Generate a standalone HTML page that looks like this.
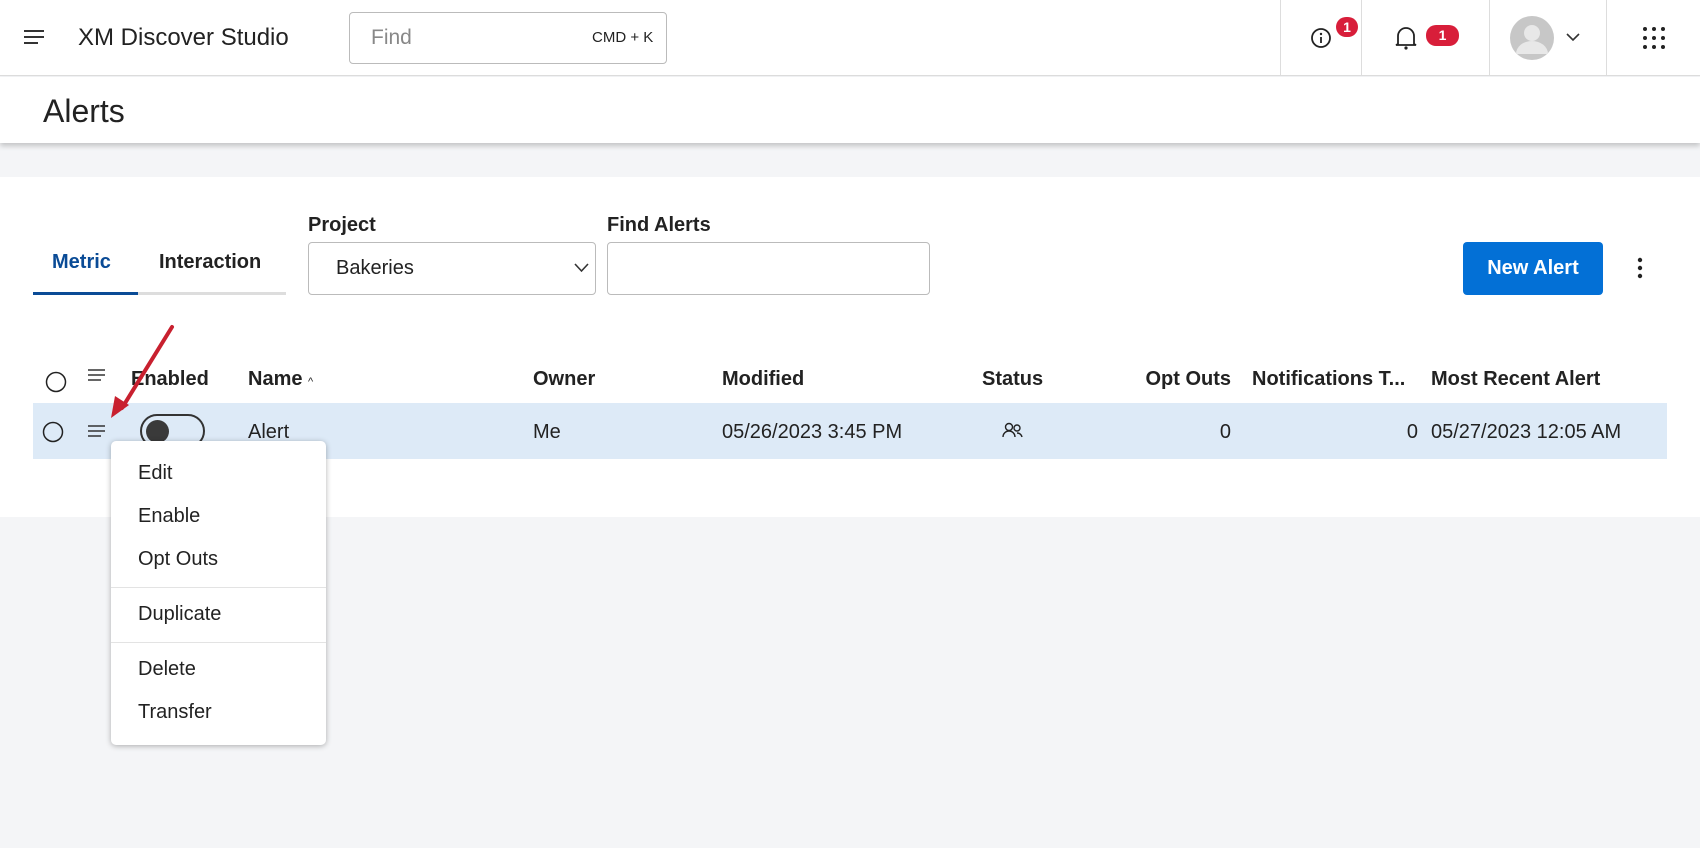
<!DOCTYPE html>
<html><head><style>
*{margin:0;padding:0;box-sizing:border-box}
body{width:1700px;height:848px;background:#f4f5f7;font-family:"Liberation Sans",sans-serif;color:#222;position:relative;overflow:hidden}
.a{position:absolute;white-space:nowrap}
.b{font-weight:bold}
.t{font-size:20px;line-height:1}
</style></head><body>
<div class="a" style="left:0;top:0;width:1700px;height:76px;background:#fff;border-bottom:1px solid #ddd"></div>
<svg class="a" style="left:24px;top:29px" width="20" height="16"><path d="M0 2h20M0 8h20M0 14h14" stroke="#333" stroke-width="2"/></svg>
<div class="a" style="left:78px;top:24px;font-size:24px">XM Discover Studio</div>
<div class="a" style="left:349px;top:12px;width:318px;height:52px;border:1px solid #bbb;border-radius:4px"></div>
<div class="a" style="left:371px;top:26px;font-size:21px;color:#888">Find</div>
<div class="a" style="left:592px;top:29px;font-size:15px">CMD + K</div>
<div class="a" style="left:1280px;top:0;width:1px;height:76px;background:#ddd"></div>
<div class="a" style="left:1361px;top:0;width:1px;height:76px;background:#ddd"></div>
<div class="a" style="left:1489px;top:0;width:1px;height:76px;background:#ddd"></div>
<div class="a" style="left:1606px;top:0;width:1px;height:76px;background:#ddd"></div>
<svg class="a" style="left:1310px;top:27px" width="22" height="22"><circle cx="11" cy="11" r="9" fill="none" stroke="#222" stroke-width="1.8"/><circle cx="11" cy="7" r="1.2" fill="#222"/><path d="M11 10v6" stroke="#222" stroke-width="1.8"/></svg>
<div class="a b" style="left:1336px;top:17px;width:22px;height:20px;border-radius:10px;background:#d81e3a;color:#fff;font-size:14px;text-align:center;line-height:20px">1</div>
<svg class="a" style="left:1395px;top:25px" width="22" height="26"><path d="M3 19V11a8 8 0 0 1 16 0v8l2 1H1z" fill="none" stroke="#222" stroke-width="1.8"/><circle cx="11" cy="23" r="1.6" fill="#222"/></svg>
<div class="a b" style="left:1426px;top:25px;width:33px;height:21px;border-radius:10px;background:#d81e3a;color:#fff;font-size:14px;text-align:center;line-height:21px">1</div>
<svg class="a" style="left:1510px;top:16px" width="44" height="44"><circle cx="22" cy="22" r="22" fill="#c7c7c7"/><circle cx="22" cy="17" r="8" fill="#e8e8e8"/><path d="M6 38a16 13 0 0 1 32 0" fill="#e8e8e8"/></svg>
<svg class="a" style="left:1566px;top:33px" width="14" height="9"><path d="M1 1l6 6 6-6" fill="none" stroke="#333" stroke-width="1.6"/></svg>
<svg class="a" style="left:1642px;top:26px" width="24" height="24"><g fill="#222"><circle cx="3" cy="3" r="2"/><circle cx="12" cy="3" r="2"/><circle cx="21" cy="3" r="2"/><circle cx="3" cy="12" r="2"/><circle cx="12" cy="12" r="2"/><circle cx="21" cy="12" r="2"/><circle cx="3" cy="21" r="2"/><circle cx="12" cy="21" r="2"/><circle cx="21" cy="21" r="2"/></g></svg>

<div class="a" style="left:0;top:77px;width:1700px;height:66px;background:#fff;box-shadow:0 3px 5px rgba(0,0,0,.2)"></div>
<div class="a" style="left:43px;top:93px;font-size:32px">Alerts</div>

<div class="a" style="left:0;top:177px;width:1700px;height:340px;background:#fff"></div>
<div class="a b t" style="left:52px;top:252px;color:#0a4b96">Metric</div>
<div class="a b t" style="left:159px;top:252px">Interaction</div>
<div class="a" style="left:33px;top:292px;width:253px;height:3px;background:#ddd"></div>
<div class="a" style="left:33px;top:292px;width:105px;height:3px;background:#0a4b96"></div>
<div class="a b t" style="left:308px;top:215px">Project</div>
<div class="a" style="left:308px;top:242px;width:288px;height:53px;border:1px solid #bbb;border-radius:4px;background:#fff"></div>
<div class="a t" style="left:336px;top:258px">Bakeries</div>
<svg class="a" style="left:574px;top:263px" width="15" height="10"><path d="M1 1l6.5 7 6.5-7" fill="none" stroke="#333" stroke-width="1.6"/></svg>
<div class="a b t" style="left:607px;top:215px">Find Alerts</div>
<div class="a" style="left:607px;top:242px;width:323px;height:53px;border:1px solid #bbb;border-radius:4px;background:#fff"></div>
<div class="a b t" style="left:1463px;top:242px;width:140px;height:53px;background:#0370d6;border-radius:4px;color:#fff;text-align:center;line-height:53px">New Alert</div>
<svg class="a" style="left:1637px;top:257px" width="6" height="22"><g fill="#222"><circle cx="3" cy="3" r="2.2"/><circle cx="3" cy="11" r="2.2"/><circle cx="3" cy="19" r="2.2"/></g></svg>

<svg class="a" style="left:45px;top:371px" width="22" height="22"><circle cx="11" cy="11" r="9.5" fill="none" stroke="#222" stroke-width="1.5"/></svg>
<svg class="a" style="left:88px;top:369px" width="18" height="14"><path d="M0 1h17M0 6h17M0 11h13" stroke="#333" stroke-width="1.5"/></svg>
<div class="a b t" style="left:131px;top:369px">Enabled</div>
<div class="a b t" style="left:248px;top:369px">Name <span style="font-size:11px;font-weight:normal">^</span></div>
<div class="a b t" style="left:533px;top:369px">Owner</div>
<div class="a b t" style="left:722px;top:369px">Modified</div>
<div class="a b t" style="left:982px;top:369px">Status</div>
<div class="a b t" style="left:1111px;top:369px;width:120px;text-align:right">Opt Outs</div>
<div class="a b t" style="left:1252px;top:369px">Notifications T...</div>
<div class="a b t" style="left:1431px;top:369px">Most Recent Alert</div>

<div class="a" style="left:33px;top:403px;width:1634px;height:56px;background:#ddeaf7"></div>
<svg class="a" style="left:42px;top:421px" width="22" height="22"><circle cx="11" cy="11" r="9.5" fill="none" stroke="#222" stroke-width="1.5"/></svg>
<svg class="a" style="left:88px;top:425px" width="18" height="14"><path d="M0 1h17M0 6h17M0 11h13" stroke="#333" stroke-width="1.5"/></svg>
<div class="a" style="left:140px;top:414px;width:65px;height:34px;border:2px solid #333;border-radius:17px"></div>
<div class="a" style="left:146px;top:420px;width:23px;height:23px;border-radius:50%;background:#3a3a3a"></div>
<div class="a t" style="left:248px;top:422px">Alert</div>
<div class="a t" style="left:533px;top:422px">Me</div>
<div class="a t" style="left:722px;top:422px">05/26/2023 3:45 PM</div>
<svg class="a" style="left:1002px;top:422px" width="22" height="16"><circle cx="7" cy="5" r="3.5" fill="none" stroke="#222" stroke-width="1.4"/><path d="M1 15a6 6 0 0 1 12 0" fill="none" stroke="#222" stroke-width="1.4"/><circle cx="15" cy="6" r="3" fill="none" stroke="#222" stroke-width="1.4"/><path d="M15 11a5 5 0 0 1 5 4" fill="none" stroke="#222" stroke-width="1.4"/></svg>
<div class="a t" style="left:1131px;top:422px;width:100px;text-align:right">0</div>
<div class="a t" style="left:1318px;top:422px;width:100px;text-align:right">0</div>
<div class="a t" style="left:1431px;top:422px">05/27/2023 12:05 AM</div>

<div class="a" style="left:111px;top:441px;width:215px;height:304px;background:#fff;border-radius:5px;box-shadow:0 1px 6px rgba(0,0,0,.3)"></div>
<div class="a t" style="left:138px;top:463px">Edit</div>
<div class="a t" style="left:138px;top:506px">Enable</div>
<div class="a t" style="left:138px;top:549px">Opt Outs</div>
<div class="a" style="left:111px;top:587px;width:215px;height:1px;background:#e3e3e3"></div>
<div class="a t" style="left:138px;top:604px">Duplicate</div>
<div class="a" style="left:111px;top:642px;width:215px;height:1px;background:#e3e3e3"></div>
<div class="a t" style="left:138px;top:659px">Delete</div>
<div class="a t" style="left:138px;top:702px">Transfer</div>

<svg class="a" style="left:100px;top:320px" width="80" height="105"><path d="M72 7L22 88" stroke="#c8202f" stroke-width="4" stroke-linecap="round"/><path d="M11 98l4-22 14 9z" fill="#c8202f"/></svg>
</body></html>
